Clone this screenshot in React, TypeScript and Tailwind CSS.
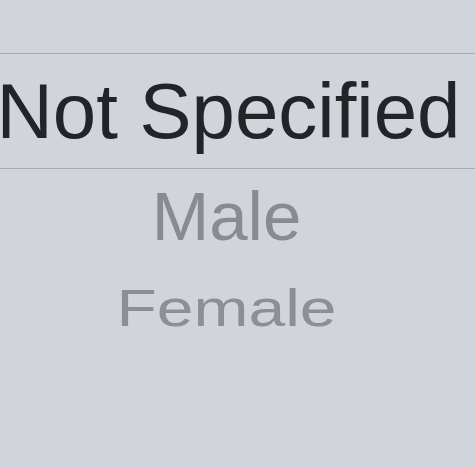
const options = ["Not Specified", "Male", "Female"];

export default function App() {
  return (
    <div
      className="h-[467px] w-[475px] overflow-hidden bg-[#d2d4dc] flex flex-col"
      style={{ fontFamily: '"Liberation Sans", Arial, sans-serif' }}
    >
      {/* space above the selection band */}
      <div className="h-[53px] shrink-0" />

      {/* selected row */}
      <div className="h-[116px] shrink-0 border-y border-[#a9abb3] flex justify-center pr-[18px]">
        <span className="whitespace-nowrap text-[78px] leading-[114px] text-[#232428]">
          {options[0]}
        </span>
      </div>

      {/* rows below, rolling away on the wheel */}
      <div className="h-[95px] shrink-0 flex justify-center pr-[22px]">
        <span className="whitespace-nowrap text-[69px] leading-[95px] text-[#8a8b91]">
          {options[1]}
        </span>
      </div>
      <div className="shrink-0 flex justify-center pt-[11px] pr-[22px]">
        <span className="inline-block whitespace-nowrap text-[66px] leading-none text-[#8e8f95] scale-y-[0.78]">
          {options[2]}
        </span>
      </div>
    </div>
  );
}
